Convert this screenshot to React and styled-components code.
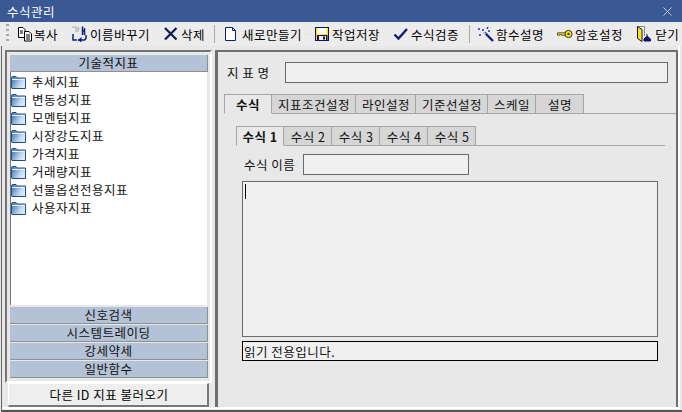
import React from 'react';
import styled, { createGlobalStyle } from 'styled-components';

const Global = createGlobalStyle`
  html, body { margin: 0; padding: 0; background: #e8e8e8; }
  #root { width: 682px; height: 412px; overflow: hidden; }
  * { box-sizing: border-box; }
`;
const font = `"Noto Sans CJK KR", "Noto Sans", sans-serif`;

const Win = styled.div`
  width: 682px; height: 412px; display: flex; flex-direction: column;
  background: #e8e8e8; font-family: ${font}; font-size: 12.5px; letter-spacing: .5px; color: #111; overflow: hidden;
`;
const TitleBar = styled.div`
  height: 22px; flex: none; background: #3a5893; color: #fff; display: flex; align-items: center;
  justify-content: space-between; padding: 0 10px 0 7px;
`;
const Close = styled.svg`width: 9px; height: 9px; stroke: #c4cfe2; stroke-width: 1; fill: none;`;
const Toolbar = styled.div`
  height: 24px; flex: none; display: flex; align-items: center; background: #ececec; padding-left: 6px;
  white-space: nowrap;
`;
const Grip = styled.div`
  width: 3px; height: 20px; margin-right: 8px; flex: none;
  background: repeating-linear-gradient(to bottom, #a8a8a8 0 2px, transparent 2px 5px);
`;
const Tool = styled.div`
  display: flex; align-items: center; gap: ${p => p.$g}px; margin-right: ${p => p.$mr}px; height: 20px; color: #000;
`;
const Ico = styled.svg`width: 16px; height: 16px; flex: none; display: block;`;
const Sep = styled.div`width: 1px; height: 18px; background: #a9a9a9; margin-right: 8px; flex: none;`;
const Body = styled.div`
  flex: 1; display: flex; min-height: 0; margin-left: 1px; padding: 0 2px 1px 0;
  border-left: 1px solid #666; border-bottom: 2px solid #555;
`;
const Inset = styled.div`
  flex: 1; display: flex; gap: 3px; padding: 4px 0 0 3px; min-height: 0;
  border-right: 2px solid #fff; border-bottom: 2px solid #fff;
`;
const Left = styled.div`width: 207px; flex: none; display: flex; flex-direction: column;`;
const LeftBox = styled.div`
  height: 333px; flex: none; display: flex; flex-direction: column; gap: 1px; padding: 3px 2px 3px 3px;
  border-top: 2px solid #757575; border-left: 2px solid #757575;
  border-right: 2px solid #fff; border-bottom: 2px solid #fff;
`;
const Band = styled.div`
  height: 17px; flex: none; background: #b3c2d6; border-bottom: 1px solid #8f8f8f; border-right: 1px solid #8f8f8f;
  padding-bottom: 1px; display: flex; align-items: center; justify-content: center; color: #111;
`;
const List = styled.div`
  flex: 1; background: #fff; margin: -1px 1px 1px 0; padding: 1px 0 0 0; border-left: 1px solid #777;
  display: flex; flex-direction: column;
`;
const Item = styled.div`height: 18px; display: flex; align-items: center; gap: 5px; color: #111;`;
const ItemText = styled.span`position: relative; top: -1px;`;
const Folder = styled.svg`width: 16px; height: 13px; flex: none;`;
const LoadBtn = styled.div`
  height: 24px; width: 201px; flex: none; margin-left: 3px; padding-left: 2px; background: #eeeeee; border-top: 1px solid #fff; border-left: 1px solid #fff;
  border-right: 2px solid #777; border-bottom: 2px solid #777; display: flex; align-items: center;
  justify-content: center; color: #000;
`;
const Right = styled.div`
  flex: 1; display: flex; flex-direction: column; padding: 10px 8px 0 9px;
  border-top: 2px solid #6e6e6e; border-left: 3px solid #6e6e6e; border-right: 2px solid #6e6e6e;
`;
const NameRow = styled.div`display: flex; align-items: center; height: 21px;`;
const Lbl = styled.div`width: ${p => p.$w}px; flex: none; color: #111; white-space: nowrap;`;
const Field = styled.div`
  flex: ${p => p.$w ? 'none' : 1}; width: ${p => p.$w ? p.$w + 'px' : 'auto'}; height: 21px;
  background: #f0f0f0; border: 1px solid #6a6a6a;
`;
const TabRow = styled.div`
  display: flex; flex: none; margin-top: ${p => p.$mt}px; height: 20px; border-bottom: 1px solid #a5a5a5;
  margin-left: ${p => p.$ml}px; margin-right: ${p => p.$mr}px;
`;
const Tab = styled.div`
  width: ${p => p.$w}px; height: 20px; display: flex; align-items: center; justify-content: center;
  padding-left: ${p => p.$on ? 0 : 1}px;
  border-top: 1px solid #a5a5a5; border-right: 1px solid #a5a5a5;
  border-left: ${p => p.$on ? '1px solid #a5a5a5' : 'none'};
  border-bottom: 1px solid ${p => p.$on ? '#e8e8e8' : '#a5a5a5'}; flex: none;
  background: ${p => p.$on ? '#e8e8e8' : '#d6d6d6'}; font-weight: ${p => p.$on ? 700 : 400};
  color: #111; white-space: nowrap;
`;
const FormRow = styled.div`display: flex; flex: none; align-items: center; height: 21px; margin: 8px 0 0 17px;`;
const Editor = styled.div`
  height: 156px; flex: none; margin: 6px 10px 0 15px; background: #f0f0f0; border: 1px solid #6a6a6a; padding: 2px;
`;
const Caret = styled.div`width: 1px; height: 15px; background: #000;`;
const Status = styled.div`
  height: 20px; flex: none; margin: 4px 10px 0 15px; background: #f0f0f0; border: 1px solid #000; display: flex; align-items: center;
  padding-left: 1px; color: #111;
`;

const FolderIcon = () => (
  <Folder viewBox="0 0 16 13">
    <defs><linearGradient id="fg" x1="0" y1="0" x2="1" y2="0.5"><stop offset="0" stopColor="#2f6cb0"/><stop offset=".75" stopColor="#c4daf0"/><stop offset="1" stopColor="#dbe9f7"/></linearGradient></defs>
    <path d="M.5 2.5V1.2L1.5.5H5L6 2H14.5V12.5H1L.5 12Z" fill="url(#fg)" stroke="#1f4f86"/>
    <path d="M1 3.5H14" stroke="#eaf3fc"/>
  </Folder>
);

const Copy = () => <Ico viewBox="0 0 16 16"><path d="M1.5 1.5H6L8 3.5V11.5H1.5Z" fill="#fff" stroke="#000"/><path d="M7.5 5.5H12L14.5 8V15H7.5Z" fill="#fff" stroke="#000"/><path d="M3 5H6M3 7H6M9 9H13M9 11H13M9 13H13" stroke="#000"/></Ico>;
const Rename = () => <Ico viewBox="0 0 16 16"><path d="M1 1H5V6M7 .5V6M7 3H8.5" stroke="#a8a8a8" fill="none"/><path d="M11.5 .5V9M13.5 2V9M11 5H13" stroke="#0a1f80" strokeWidth="1.5" fill="none"/><path d="M2 8V14H6" stroke="#0a1f80" strokeWidth="1.5" fill="none"/><path d="M7 14H13.5L15 12.5V9" stroke="#0a1f80" strokeWidth="1.5" fill="none"/><path d="M7 14L10.5 11V16.5Z" fill="#0a1f80"/></Ico>;
const Del = () => <Ico viewBox="0 0 16 16"><path d="M2 2L13.5 13.5M13.5 2L2 13.5" stroke="#101c58" strokeWidth="2.2"/></Ico>;
const NewDoc = () => <Ico viewBox="0 0 16 16"><path d="M2.5 1.5H9.5L12.5 4.5V14.5H2.5Z" fill="#fff" stroke="#0a1f80"/><path d="M9.5 1.5V4.5H12.5" fill="none" stroke="#0a1f80"/></Ico>;
const Save = () => <Ico viewBox="0 0 16 16"><rect x=".5" y="1.5" width="13" height="13" fill="#ffe600" stroke="#0a1470"/><rect x="2.5" y="2" width="9" height="6" fill="#fff"/><path d="M2 9H12.5V14H2Z" fill="#0a1470"/><rect x="4" y="10" width="7" height="4" fill="#f0f0f0"/><rect x="8" y="10.5" width="2" height="3" fill="#0a1470"/></Ico>;
const Check = () => <Ico viewBox="0 0 16 16"><path d="M1.5 8.5L5.5 12.5L14 3" fill="none" stroke="#101c78" strokeWidth="2.4"/></Ico>;
const Wand = () => <Ico viewBox="0 0 16 16"><path d="M6.5 6.5L15 15" stroke="#0a1f80" strokeWidth="2.4"/><path d="M5 3V5M4 4H6M9.5 1V3M8.5 2H10.5M1 2V4M0 3H2M2 8V10M1 9H3M10 5H12M11 4V6" stroke="#1a3aa0"/><path d="M5 6L7.5 8.5" stroke="#ccc" strokeWidth="2"/></Ico>;
const Key = () => <Ico viewBox="0 0 16 16"><circle cx="11.5" cy="8" r="3.6" fill="#ffe600" stroke="#333"/><circle cx="11.5" cy="8" r="1.2" fill="#333"/><path d="M8 6.8H.5V9.2H2.5V8.6H4.5V9.2H8Z" fill="#ffe600" stroke="#333" strokeWidth=".8"/></Ico>;
const Door = () => <Ico viewBox="0 0 16 16"><path d="M1.5 .5H8.5V10" stroke="#888" fill="none"/><path d="M1.5 .5L6 3.5V15.5L1.5 12.5Z" fill="#ffe600" stroke="#0a1470"/><path d="M11 8V10M8 13L11 10L14.5 13V15H8Z" fill="#0a1470" stroke="#0a1470"/></Ico>;

const items = ['추세지표','변동성지표','모멘텀지표','시장강도지표','가격지표','거래량지표','선물옵션전용지표','사용자지표'];

export default function App() {
  return (
    <Win>
      <Global />
      <TitleBar>수식관리<Close viewBox="0 0 9 9"><path d="M.5.5L8.5 8.5M8.5.5L.5 8.5"/></Close></TitleBar>
      <Toolbar>
        <Grip />
        <Tool $g={1} $mr={13}><Copy />복사</Tool>
        <Tool $g={3} $mr={13}><Rename />이름바꾸기</Tool>
        <Tool $g={2} $mr={9}><Del />삭제</Tool>
        <Sep />
        <Tool $g={3} $mr={13}><NewDoc />새로만들기</Tool>
        <Tool $g={1} $mr={13}><Save />작업저장</Tool>
        <Tool $g={2} $mr={10}><Check />수식검증</Tool>
        <Sep />
        <Tool $g={2} $mr={13}><Wand />함수설명</Tool>
        <Tool $g={2} $mr={13}><Key />암호설정</Tool>
        <Tool $g={3} $mr={0}><Door />닫기</Tool>
      </Toolbar>
      <Body>
        <Inset>
          <Left>
            <LeftBox>
              <Band>기술적지표</Band>
              <List>
                {items.map(t => <Item key={t}><FolderIcon /><ItemText>{t}</ItemText></Item>)}
              </List>
              <Band>신호검색</Band>
              <Band>시스템트레이딩</Band>
              <Band>강세약세</Band>
              <Band>일반함수</Band>
            </LeftBox>
            <LoadBtn>다른 ID 지표 불러오기</LoadBtn>
          </Left>
          <Right>
            <NameRow>
              <Lbl $w={58}>지 표 명</Lbl>
              <Field />
            </NameRow>
            <TabRow $mt={11} $ml={-3} $mr={-8}>
              <Tab $on $w={48}>수식</Tab>
              <Tab $w={84}>지표조건설정</Tab>
              <Tab $w={60}>라인설정</Tab>
              <Tab $w={72}>기준선설정</Tab>
              <Tab $w={48}>스케일</Tab>
              <Tab $w={48}>설명</Tab>
            </TabRow>
            <TabRow $mt={12} $ml={9} $mr={3}>
              <Tab $on $w={48}>수식 1</Tab>
              <Tab $w={48}>수식 2</Tab>
              <Tab $w={48}>수식 3</Tab>
              <Tab $w={48}>수식 4</Tab>
              <Tab $w={48}>수식 5</Tab>
            </TabRow>
            <FormRow>
              <Lbl $w={59}>수식 이름</Lbl>
              <Field $w={166} />
            </FormRow>
            <Editor><Caret /></Editor>
            <Status>읽기 전용입니다.</Status>
          </Right>
        </Inset>
      </Body>
    </Win>
  );
}
